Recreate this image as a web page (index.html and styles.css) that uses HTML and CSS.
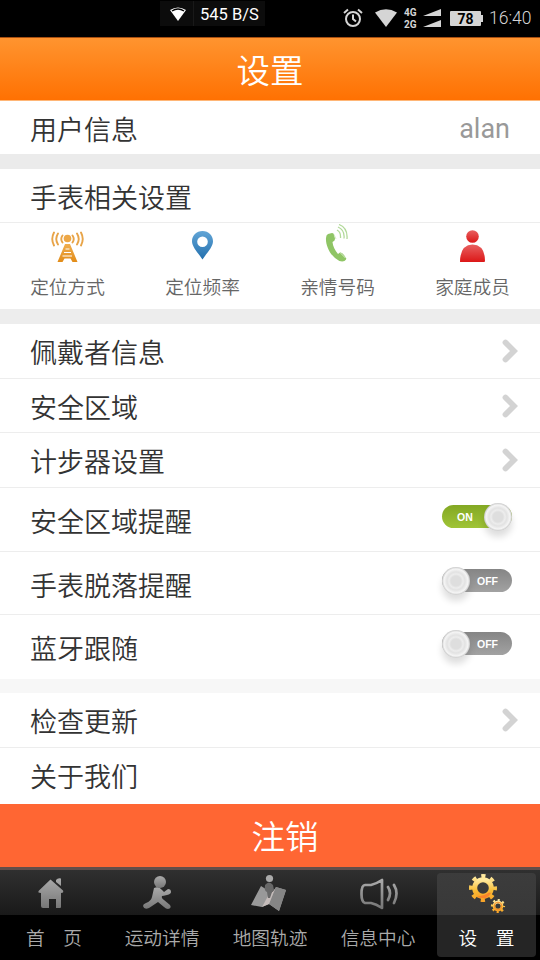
FILE: index.html
```html
<!DOCTYPE html>
<html lang="zh-CN">
<head>
<meta charset="utf-8">
<title>设置</title>
<link rel="stylesheet" href="styles.css">
</head>
<body>
<svg class="defs" width="0" height="0" aria-hidden="true">
  <defs>
    <linearGradient id="metal" x1="0" y1="0" x2="0" y2="1"><stop offset="0" stop-color="#aaa"/><stop offset="1" stop-color="#777"/></linearGradient>
    <linearGradient id="amber" x1="0" y1="0" x2="0" y2="1"><stop offset="0" stop-color="#efae50"/><stop offset="1" stop-color="#e28c18"/></linearGradient>
    <linearGradient id="blue" x1="0" y1="0" x2="0" y2="1"><stop offset="0" stop-color="#62a5d6"/><stop offset="1" stop-color="#2370ae"/></linearGradient>
    <linearGradient id="red" x1="0" y1="0" x2="0" y2="1"><stop offset="0" stop-color="#e86060"/><stop offset="1" stop-color="#dc1717"/></linearGradient>
    <linearGradient id="gold" x1="0" y1="0" x2="0" y2="1"><stop offset="0" stop-color="#ffeaa0"/><stop offset=".65" stop-color="#f8bd36"/><stop offset="1" stop-color="#f9a529"/></linearGradient>
  </defs>
</svg>
<header class="status">
  <div class="speed">
    <span class="speed-icon"><svg width="18" height="16" viewBox="0 0 18 16"><path d="M1 4Q9-1 17 4L9 15Z" fill="#fff"/><path d="M3 5Q9 1 15 5" fill="none" stroke="#000" stroke-width="1.5"/></svg></span>
    <span class="speed-text">545 B/S</span>
  </div>
  <div class="indicators">
    <svg class="alarm" width="20" height="20" viewBox="0 0 20 20" fill="none" stroke="#d5d5d5" stroke-width="2"><circle cx="10" cy="11" r="7"/><path d="M10 6.500V11L13 13.500M1 5L5 1.500M19 5L15 1.500"/></svg>
    <svg class="wifi" width="22" height="18" viewBox="0 0 22 18"><path d="M0 3.500Q11-3 22 3.500L11 18Z" fill="#d5d5d5"/></svg>
    <span class="network"><span>4G</span><span>2G</span></span>
    <svg class="signal" width="18" height="20" viewBox="0 0 18 20" fill="#d5d5d5"><path d="M0 8L18 1V8ZM0 19L18 12V19Z"/></svg>
    <span class="battery">78</span>
    <span class="clock">16:40</span>
  </div>
</header>
<h1 class="title">设置</h1>
<main>
  <section class="group">
    <div class="row first"><span>用户信息</span><span class="value">alan</span></div>
  </section>
  <section class="group watch">
    <div class="row heading"><span>手表相关设置</span></div>
    <div class="shortcuts">
      <div class="shortcut">
        <svg width="36" height="40" viewBox="0 0 36 40"><g fill="none" stroke="#e8a448" stroke-width="1.900" stroke-linecap="round"><path d="M12.500 11.500Q10 15 12.500 18.500M8 9.500Q4.500 15 8 20.500M4 8.500Q.5 15 4 21.500M22.500 11.500Q25 15 22.500 18.500M27 9.500Q30.500 15 27 20.500M31 8.500Q34.500 15 31 21.500"/></g><circle cx="17.500" cy="14.500" r="3.800" fill="#eda746"/><path d="M15 20H20L27.500 38H22.500L20.500 34.500H14.500L12.500 38H7.500Z" fill="url(#amber)"/><path d="M15.500 25H19.500M14 28.500H21M12.500 32H22" stroke="#fff" stroke-width="1"/></svg>
        <span>定位方式</span>
      </div>
      <div class="shortcut">
        <svg width="36" height="40" viewBox="0 0 36 40"><path fill="url(#blue)" fill-rule="evenodd" d="M17.500 7C11.400 7 7 11.500 7 17.200C7 23 13 28.500 17.500 35.500C22 28.500 28 23 28 17.200C28 11.500 23.600 7 17.500 7ZM17.500 12.500A5.300 5.300 0 1 1 17.500 23.100A5.300 5.300 0 1 1 17.500 12.500Z"/></svg>
        <span>定位频率</span>
      </div>
      <div class="shortcut">
        <svg width="36" height="40" viewBox="0 0 36 40"><path d="M8 10L12 9Q14 9 14.500 12L15 15Q15 17 12.500 18Q13 24 18 30L20 28.500Q22 28 24 31L26 34Q27 35 24.500 37Q20 38.500 15 34C9 29 5.500 20 6 14Q6 11 8 10Z" fill="#8fc565"/><path d="M14 10.500L16 15M20.500 29L25.500 34" stroke="#d7ecc7" stroke-width="1"/><g fill="none" stroke="#b2d99a" stroke-width="1.300"><path d="M17 6Q21 8 20.500 14M18 3Q25 6 24 14.500M19 .5Q28 4 27 15"/></g></svg>
        <span>亲情号码</span>
      </div>
      <div class="shortcut">
        <svg width="36" height="40" viewBox="0 0 36 40" fill="url(#red)"><circle cx="17.500" cy="12.500" r="6.300"/><path d="M5 38Q5 21 17.500 20.500Q30 21 30 37Q30 38 29 38Z"/></svg>
        <span>家庭成员</span>
      </div>
    </div>
  </section>
  <section class="group settings">
    <div class="row"><span>佩戴者信息</span><svg class="chevron" viewBox="0 0 16 24"><path d="M3.500 3.500L12 12L3.500 20.500"/></svg></div>
    <div class="row"><span>安全区域</span><svg class="chevron" viewBox="0 0 16 24"><path d="M3.500 3.500L12 12L3.500 20.500"/></svg></div>
    <div class="row"><span>计步器设置</span><svg class="chevron" viewBox="0 0 16 24"><path d="M3.500 3.500L12 12L3.500 20.500"/></svg></div>
    <div class="row tall"><span>安全区域提醒</span><div class="switch on"><span>ON</span><i class="knob"></i></div></div>
    <div class="row tall"><span>手表脱落提醒</span><div class="switch"><i class="knob"></i><span>OFF</span></div></div>
    <div class="row tall last"><span>蓝牙跟随</span><div class="switch"><i class="knob"></i><span>OFF</span></div></div>
  </section>
  <section class="group about">
    <div class="row"><span>检查更新</span><svg class="chevron" viewBox="0 0 16 24"><path d="M3.500 3.500L12 12L3.500 20.500"/></svg></div>
    <div class="row last"><span>关于我们</span></div>
  </section>
  <div class="logout">注销</div>
</main>
<nav class="tabs">
  <div class="tab">
    <svg width="40" height="40" viewBox="0 0 40 40"><path d="M16.500 6.500L29 17.500Q30 20 27 20V34Q27 35 26 35H22V26H15V35H9Q7 35 7 33V20Q3 20 5 17.500ZM22 7Q24 4.500 27 5.500V13L22 9Z" fill="url(#metal)"/></svg>
    <span>首　页</span>
  </div>
  <div class="tab">
    <svg width="40" height="40" viewBox="0 0 40 40"><circle cx="18" cy="9" r="6" fill="url(#metal)"/><path d="M12 15Q17 13 20 17L22 19L26 16Q29 16 29 19Q29 21 25 22Q21 23 20 23Q19 25 22 27L28 32Q30 35 26 36Q24 36 22 34L16 29L7 35Q2 37 1 33Q1 31 4 30Q9 28 10 24Z" fill="url(#metal)"/></svg>
    <span>运动详情</span>
  </div>
  <div class="tab">
    <svg width="40" height="40" viewBox="0 0 40 40"><path d="M11 13L1 32L12 34L19 31L29 38L36 17L26 14L22 20Z" fill="#999"/><path d="M19 31L26 14L36 17L29 38Z" fill="#858585"/><path d="M12 34L18 23L25 16L19 31Z" fill="#c5bcba"/><path d="M15 12Q19 7 23 12L24 17Q23 19 22 19L20 25H18L17 19Q14 18 15 12Z" fill="#686868"/><circle cx="19.500" cy="5.500" r="3.600" fill="#aaa"/></svg>
    <span>地图轨迹</span>
  </div>
  <div class="tab">
    <svg width="40" height="40" viewBox="0 0 40 40" fill="none" stroke="url(#metal)" stroke-width="2.700" stroke-linejoin="round" stroke-linecap="round"><path d="M3.500 21Q3.500 12 7 12H13Q18 11 24 7V35Q18 31 13 30H7Q3.500 29 3.500 21ZM30 14Q34 20 30 27M36 12Q41 20 36 30"/></svg>
    <span>信息中心</span>
  </div>
  <div class="tab active">
    <svg width="40" height="40" viewBox="0 0 40 40"><g fill="none" stroke="url(#gold)"><circle cx="17" cy="15" r="8.300" stroke-width="5"/><circle cx="17" cy="15" r="12" stroke-width="4" stroke-dasharray="4.200 5.225" stroke-dashoffset="2.100"/><circle cx="32" cy="33" r="4" stroke-width="2.800"/><circle cx="32" cy="33" r="6" stroke-width="2.200" stroke-dasharray="2.100 2.612" stroke-dashoffset="1"/></g><path d="M11 23Q17 24 23 19.500L25 20Q23 24 19 25.300Q14 25.500 11 23Z" fill="#f9792c" opacity=".8"/><circle cx="32" cy="33" r="3.800" fill="none" stroke="#f68a2b" stroke-width="1"/></svg>
    <span>设　置</span>
  </div>
</nav>
</body>
</html>
```
FILE: styles.css
```css
* { box-sizing: border-box; }

body {
  margin: 0;
  width: 540px;
  height: 960px;
  overflow: hidden;
  background: #fff;
  color: #333;
  font-family: Roboto, "Noto Sans CJK SC", sans-serif;
  font-weight: 350;
}

svg { display: block; flex: none; }
.defs { position: absolute; }

.status {
  display: flex;
  justify-content: space-between;
  height: 37px;
  padding: 1px 8px 0 160px;
  background: #000;
  font-weight: 400;
}
.speed { display: flex; width: 105px; height: 25px; background: #0c0c0c; }
.speed-icon { width: 34px; padding: 5px 0 0 9px; border-right: 1px solid #191919; }
.speed-text { padding-left: 6px; color: #fff; font-size: 16.500px; line-height: 28px; white-space: nowrap; }
.indicators { display: flex; align-items: center; height: 34px; color: #d5d5d5; }
.wifi { margin-left: 12px; }
.network {
  display: flex;
  flex-direction: column;
  width: 15px;
  margin: 1px 4px 0 7px;
  font: 700 10px/12px Roboto, sans-serif;
}
.battery {
  position: relative;
  width: 31px;
  height: 15px;
  margin: 1px 8px 0 9px;
  border-radius: 1px;
  background: #d5d5d5;
  color: #000;
  font: 700 14px/16px Roboto, sans-serif;
  text-align: center;
}
.battery::after {
  content: "";
  position: absolute;
  top: 4px;
  right: -2px;
  width: 2px;
  height: 7px;
  background: #d5d5d5;
}
.clock { width: 43px; font-size: 17.500px; font-weight: 300; line-height: 34px; white-space: nowrap; }

.title {
  height: 64px;
  margin: 0;
  border-top: 1px solid #a84f10;
  border-bottom: 1px solid #ffb676;
  background: linear-gradient(#ff942f, #ff7102);
  color: #fff;
  font-size: 33.500px;
  font-weight: 350;
  line-height: 68px;
  text-align: center;
}

.group { border-bottom: 15px solid #ebebeb; }
.row {
  display: flex;
  justify-content: space-between;
  height: 54.700px;
  padding: 0 22px 0 30px;
  border-bottom: 1.500px solid #ededed;
  font-size: 27px;
  line-height: 60px;
}
.row.first { height: 53px; padding-right: 30px; border: 0; }
.row.heading { height: 54px; line-height: 61px; }
.value { color: #999; font-weight: 400; line-height: 56px; }
.row.tall { height: 63.600px; line-height: 70px; }
.row.last { border: 0; }
.chevron {
  width: 16px;
  height: 24px;
  margin-top: 15px;
  fill: none;
  stroke: #d3d3d3;
  stroke-width: 5.800;
  stroke-linecap: round;
}
.watch { border-color: #ededed; }
.shortcuts { display: grid; grid-template-columns: repeat(4, 1fr); height: 86px; }
.shortcut {
  display: flex;
  flex-direction: column;
  align-items: center;
  color: #666;
  font-size: 18.700px;
  line-height: 26px;
}
.shortcut svg { margin-top: 1px; }
.shortcut span { margin-top: 11px; }

.switch {
  position: relative;
  width: 70px;
  height: 23px;
  margin: 17px 6px 0 0;
  border-radius: 12px;
  background: linear-gradient(#858585, #a2a2a2);
  color: #fff;
  font: 700 10.500px/24px "Liberation Sans", sans-serif;
}
.switch span { display: block; padding-left: 35px; }
.switch.on { background: linear-gradient(#83a823, #a0c437); }
.switch.on span { padding-left: 15px; }
.knob {
  position: absolute;
  top: -2px;
  left: 0;
  width: 28px;
  height: 28px;
  border-radius: 50%;
  background: radial-gradient(circle, #dedede 0 5px, #ededed 7px, #e2e2e2 9px, #f5f5f5 12px, #c8c8c8 14px);
  box-shadow: 0 6px 7px #0002;
}
.on .knob { right: 0; left: auto; }

.settings { border-bottom: 14px solid #f7f7f7; }
.about { height: 111px; border: 0; }
.logout {
  height: 63px;
  padding-left: 30px;
  background: #ff6633;
  color: #fff;
  font-size: 33.500px;
  line-height: 67px;
  text-align: center;
}

.tabs {
  display: grid;
  grid-template-columns: repeat(5, 1fr);
  height: 93px;
  padding-top: 3px;
  border-top: 3px solid #634d49;
  background: linear-gradient(#303030, #191919 45px, #000 45px);
}
.tab {
  display: flex;
  flex-direction: column;
  align-items: center;
  height: 84px;
  color: #aaa;
  font-size: 18.700px;
  line-height: 28px;
}
.tab svg { margin-left: -1px; }
.tab span { margin-top: 12px; white-space: nowrap; }
.tab.active {
  margin: 0 4px 0 5px;
  border-radius: 4px;
  background: linear-gradient(#3c3c3c, #383838 42px, #252525 42px);
  color: #fff;
}
```
